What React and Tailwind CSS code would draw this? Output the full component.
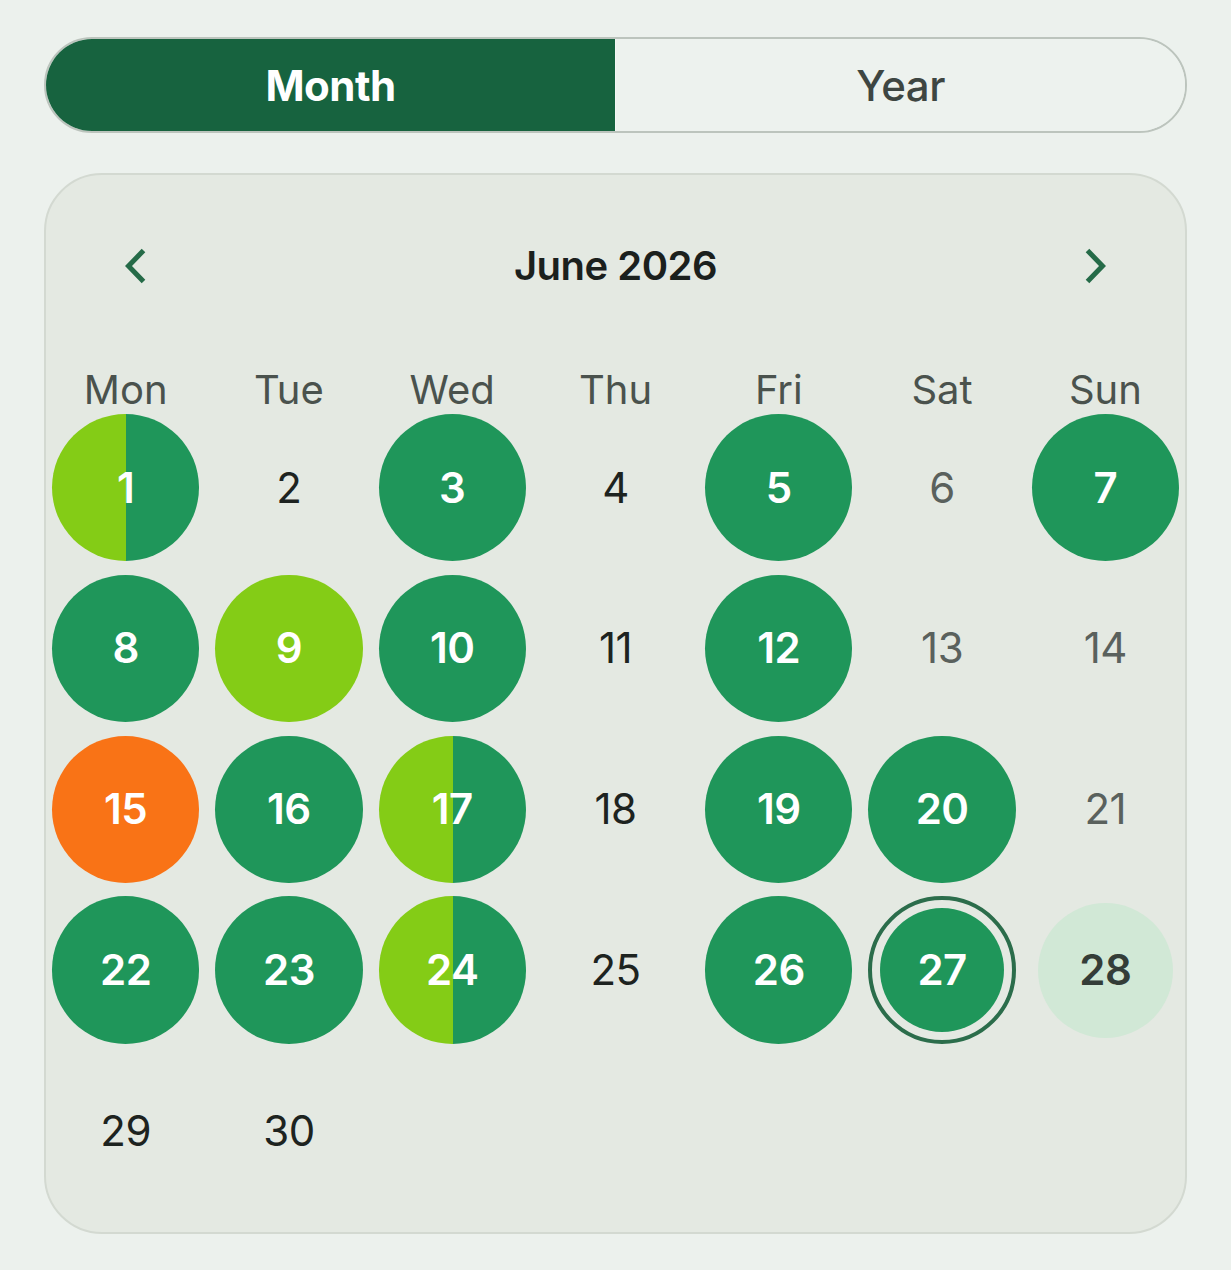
import React from "react";

const FONT = { fontFamily: "Inter, 'Noto Sans', sans-serif" };

const days = [
  [1, "split"], [2, "none"], [3, "green"], [4, "none"], [5, "green"], [6, "we"], [7, "green"],
  [8, "green"], [9, "lime"], [10, "green"], [11, "none"], [12, "green"], [13, "we"], [14, "we"],
  [15, "orange"], [16, "green"], [17, "split"], [18, "none"], [19, "green"], [20, "green"], [21, "we"],
  [22, "green"], [23, "green"], [24, "split"], [25, "none"], [26, "green"], [27, "today"], [28, "light"],
  [29, "none"], [30, "none"],
];

function Day({ n, kind }) {
  const base = "flex items-center justify-center rounded-full text-[42px] leading-none tracking-[-0.5px]";
  if (kind === "green")
    return <div className={`${base} w-full aspect-square bg-[#1f965a] text-white font-semibold`}>{n}</div>;
  if (kind === "lime")
    return <div className={`${base} w-full aspect-square bg-[#84cc16] text-white font-semibold`}>{n}</div>;
  if (kind === "orange")
    return <div className={`${base} w-full aspect-square bg-[#f97316] text-white font-semibold`}>{n}</div>;
  if (kind === "split")
    return (
      <div className={`${base} w-full aspect-square bg-[linear-gradient(to_right,#84cc16_50%,#1f965a_50%)] text-white font-semibold`}>
        {n}
      </div>
    );
  if (kind === "today")
    return (
      <div className="w-full aspect-square rounded-full border-[4px] border-[#2b6d4b] p-[8px]">
        <div className={`${base} w-full h-full bg-[#1f965a] text-white font-semibold`}>{n}</div>
      </div>
    );
  if (kind === "light")
    return (
      <div className="w-full aspect-square flex items-center justify-center">
        <div className={`${base} w-[135px] h-[135px] bg-[#d1e8d6] text-[#343d38] font-semibold`}>{n}</div>
      </div>
    );
  if (kind === "we")
    return <div className={`${base} w-full aspect-square text-[#5a615d] font-normal`}>{n}</div>;
  return <div className={`${base} w-full aspect-square text-[#1d2320] font-normal`}>{n}</div>;
}

function Chevron({ dir }) {
  return (
    <svg width="22" height="36" viewBox="0 0 22 36" fill="none">
      <polyline
        points={dir === "left" ? "18.5,2.5 3.5,18 18.5,33.5" : "3.5,2.5 18.5,18 3.5,33.5"}
        stroke="#256b48"
        strokeWidth="5"
        strokeLinecap="butt"
        strokeLinejoin="miter"
      />
    </svg>
  );
}

export default function App() {
  const labels = ["Mon", "Tue", "Wed", "Thu", "Fri", "Sat", "Sun"];
  return (
    <div className="min-h-screen bg-[#ecf1ed] px-[44px] pt-[37px] pb-[36px]" style={FONT}>
      <div className="flex h-[96px] rounded-full border-2 border-[#bcc4bd] overflow-hidden">
        <div className="flex-1 flex items-center justify-center bg-[#17633f] text-white text-[42px] font-bold tracking-[-0.5px]">
          Month
        </div>
        <div className="w-px bg-[#f4f7f4]" />
        <div className="flex-1 flex items-center justify-center bg-[#edf2ee] text-[#3e4642] text-[42px] font-medium tracking-[-0.5px]">
          Year
        </div>
      </div>

      <div className="mt-[40px] rounded-[58px] border-2 border-[#d3d9d1] bg-[#e4e9e2] px-[6px] pb-[28px]">
        <div className="flex items-center justify-between px-[73px] pt-[67px] h-[115px]">
          <Chevron dir="left" />
          <div className="text-[40px] font-semibold text-[#1b201d] leading-[48px] tracking-[-0.5px]">June 2026</div>
          <Chevron dir="right" />
        </div>

        <div className="mt-[76px] grid grid-cols-7 gap-x-[16px]">
          {labels.map((l) => (
            <div key={l} className="text-center text-[40px] leading-[48px] text-[#4a524d] font-normal">
              {l}
            </div>
          ))}
        </div>

        <div className="grid grid-cols-7 gap-x-[16px] gap-y-[13.5px]">
          {days.map(([n, k]) => (
            <Day key={n} n={n} kind={k} />
          ))}
        </div>
      </div>
    </div>
  );
}
